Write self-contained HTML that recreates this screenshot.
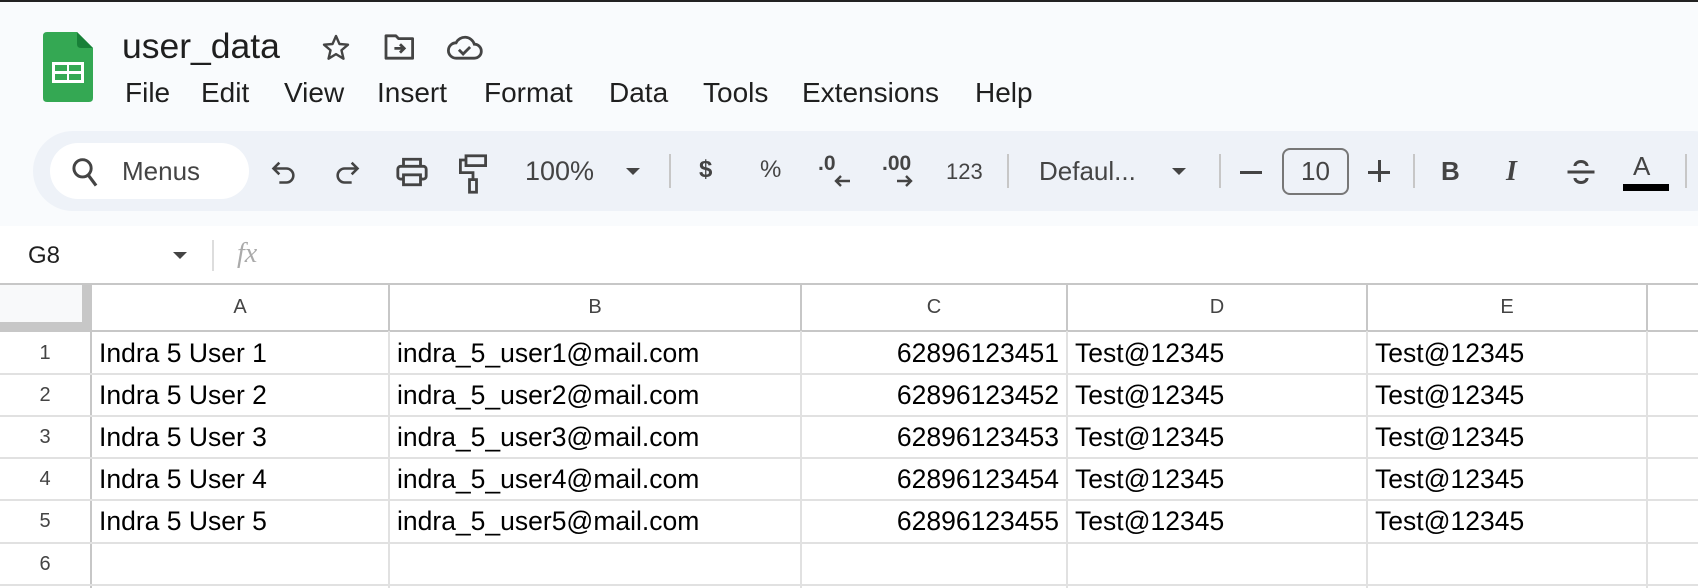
<!DOCTYPE html>
<html><head><meta charset="utf-8"><style>
*{margin:0;padding:0;box-sizing:border-box}
body{width:1698px;height:588px;overflow:hidden;background:#fff;font-family:"Liberation Sans",Arial,sans-serif;position:relative;color:#000}
.a{position:absolute}
.hdr{left:0;top:0;width:1698px;height:226px;background:#f9fbfd;border-top:2px solid #222}
.tb{left:33px;top:131px;width:1700px;height:80px;background:#eef2f8;border-radius:40px}
.pill{left:50px;top:143px;width:199px;height:56px;background:#fff;border-radius:28px}
.menu{top:77px;font-size:28px;color:#1f1f1f}
.t{font-size:26px;color:#444;top:156px}
.sep{width:2px;height:34px;background:#c7c7c7;top:154px}
.v{position:absolute;width:2px;background:#e1e1e1}
.h{position:absolute;height:2px;background:#e1e1e1;left:0;width:1698px}
.cell{position:absolute;font-size:26.5px;line-height:42px;white-space:nowrap}
.rn{position:absolute;left:0;width:90px;text-align:center;font-size:20px;color:#444;line-height:42px}
.ch{position:absolute;top:284px;height:47px;line-height:47px;text-align:center;font-size:20px;color:#444}
</style></head><body>
<div class="a hdr"></div>
<svg class="a" style="left:43px;top:32px" width="50" height="70" viewBox="0 0 50 70">
<path d="M4 0H34L50 16V66Q50 70 46 70H4Q0 70 0 66V4Q0 0 4 0Z" fill="#34a853"/>
<path d="M34 0L50 16H38Q34 16 34 12Z" fill="#188038"/>
<rect x="9" y="30" width="32" height="21" fill="#fff"/>
<rect x="12" y="33" width="12" height="6" fill="#34a853"/><rect x="26" y="33" width="12" height="6" fill="#34a853"/>
<rect x="12" y="42" width="12" height="6" fill="#34a853"/><rect x="26" y="42" width="12" height="6" fill="#34a853"/>
</svg>
<div class="a" style="left:122px;top:26px;font-size:35.5px;color:#1f1f1f">user_data</div>
<svg class="a" style="left:319px;top:32px" width="34" height="32" viewBox="0 0 24 24"><path d="M12 3l2.6 6 6.4.5-4.9 4.2 1.5 6.3L12 16.6 6.4 20l1.5-6.3L3 9.5l6.4-.5z" fill="none" stroke="#444" stroke-width="1.8" stroke-linejoin="round"/></svg>
<svg class="a" style="left:383px;top:33px" width="34" height="28" viewBox="0 0 24 20"><path d="M2 2h7l2 2h10v14H2z" fill="none" stroke="#444" stroke-width="2" stroke-linejoin="round"/><path d="M8 11h7M12 8l3 3-3 3" fill="none" stroke="#444" stroke-width="2"/></svg>
<svg class="a" style="left:446px;top:33px" width="37" height="28" viewBox="0 0 26 20"><path d="M7 18h13a5 5 0 0 0 0-10 7 7 0 0 0-13-1 5.5 5.5 0 0 0 0 11z" fill="none" stroke="#444" stroke-width="2"/><path d="M9 12l3 3 5-5" fill="none" stroke="#444" stroke-width="2"/></svg>
<div class="a menu" style="left:125px">File</div>
<div class="a menu" style="left:201px">Edit</div>
<div class="a menu" style="left:284px">View</div>
<div class="a menu" style="left:377px">Insert</div>
<div class="a menu" style="left:484px">Format</div>
<div class="a menu" style="left:609px">Data</div>
<div class="a menu" style="left:703px">Tools</div>
<div class="a menu" style="left:802px">Extensions</div>
<div class="a menu" style="left:975px">Help</div>
<div class="a tb"></div>
<div class="a pill"></div>
<svg class="a" style="left:70px;top:156px" width="30" height="32" viewBox="0 0 24 26"><circle cx="10" cy="10" r="7" fill="none" stroke="#444" stroke-width="2.4"/><path d="M15 16l6 8" stroke="#444" stroke-width="2.6"/></svg>
<div class="a t" style="left:122px;font-size:26px">Menus</div>
<svg class="a" style="left:270px;top:158px" width="28" height="28" viewBox="0 0 24 24"><path d="M8 4L3 9l5 5" fill="none" stroke="#444" stroke-width="2.2"/><path d="M3 9h11a6 6 0 0 1 0 12H8" fill="none" stroke="#444" stroke-width="2.2"/></svg>
<svg class="a" style="left:333px;top:158px" width="28" height="28" viewBox="0 0 24 24"><path d="M16 4l5 5-5 5" fill="none" stroke="#444" stroke-width="2.2"/><path d="M21 9H10a6 6 0 0 0 0 12h6" fill="none" stroke="#444" stroke-width="2.2"/></svg>
<svg class="a" style="left:395px;top:155px" width="34" height="34" viewBox="0 0 24 24"><path d="M6 8V3h12v5" fill="none" stroke="#444" stroke-width="2"/><rect x="2" y="8" width="20" height="9" rx="2" fill="none" stroke="#444" stroke-width="2"/><rect x="6" y="14" width="12" height="7" fill="#eef2f8" stroke="#444" stroke-width="2"/></svg>
<svg class="a" style="left:459px;top:154px" width="28" height="40" viewBox="0 0 20 28"><rect x="5" y="1" width="14" height="7" fill="none" stroke="#444" stroke-width="2"/><path d="M5 4H1v9h9v5" fill="none" stroke="#444" stroke-width="2"/><rect x="7.5" y="18" width="5" height="9" fill="none" stroke="#444" stroke-width="2"/></svg>
<div class="a t" style="left:525px;font-size:27px">100%</div>
<div class="a" style="left:626px;top:168px;width:0;height:0;border-left:7px solid transparent;border-right:7px solid transparent;border-top:7px solid #444"></div>
<div class="a sep" style="left:669px"></div>
<div class="a t" style="left:699px;font-weight:bold;font-size:24px">$</div>
<div class="a t" style="left:760px;font-size:24px">%</div>
<div class="a" style="left:818px;top:152px;font-size:21px;color:#444;font-weight:bold">.0</div>
<svg class="a" style="left:833px;top:174px" width="18" height="14" viewBox="0 0 18 14"><path d="M17 7H3M8 2L3 7l5 5" fill="none" stroke="#444" stroke-width="2.4"/></svg>
<div class="a" style="left:882px;top:152px;font-size:21px;color:#444;font-weight:bold">.00</div>
<svg class="a" style="left:896px;top:174px" width="18" height="14" viewBox="0 0 18 14"><path d="M1 7h14M10 2l5 5-5 5" fill="none" stroke="#444" stroke-width="2.4"/></svg>
<div class="a t" style="left:946px;font-size:22px;top:159px">123</div>
<div class="a sep" style="left:1007px"></div>
<div class="a t" style="left:1039px;font-size:26px">Defaul...</div>
<div class="a" style="left:1172px;top:168px;width:0;height:0;border-left:7px solid transparent;border-right:7px solid transparent;border-top:7px solid #444"></div>
<div class="a sep" style="left:1219px"></div>
<div class="a" style="left:1240px;top:171px;width:22px;height:2.5px;background:#444"></div>
<div class="a" style="left:1282px;top:148px;width:67px;height:47px;border:2px solid #777;border-radius:8px;text-align:center;line-height:43px;font-size:26px;color:#444">10</div>
<div class="a" style="left:1368px;top:171px;width:22px;height:2.5px;background:#444"></div>
<div class="a" style="left:1378px;top:160px;width:2.5px;height:22px;background:#444"></div>
<div class="a sep" style="left:1413px"></div>
<div class="a t" style="left:1441px;font-weight:bold;font-size:26px">B</div>
<div class="a t" style="left:1506px;font-style:italic;font-weight:bold;font-family:'Liberation Serif',serif;font-size:28px">I</div>
<svg class="a" style="left:1566px;top:157px" width="30" height="30" viewBox="0 0 20 20"><path d="M1 10h18" stroke="#444" stroke-width="2"/><path d="M6 6a4 3 0 0 1 8 0M6 14a4 3 0 0 0 8 0" fill="none" stroke="#444" stroke-width="2"/></svg>
<div class="a t" style="left:1633px;font-size:26px;top:151px">A</div>
<div class="a" style="left:1623px;top:184px;width:46px;height:7px;background:#000"></div>
<div class="a sep" style="left:1685px"></div>
<div class="a" style="left:28px;top:242px;font-size:24px;color:#1f1f1f">G8</div>
<div class="a" style="left:173px;top:252px;width:0;height:0;border-left:7px solid transparent;border-right:7px solid transparent;border-top:7px solid #444"></div>
<div class="a" style="left:212px;top:240px;width:2px;height:31px;background:#ddd"></div>
<div class="a" style="left:237px;top:238px;font-size:28px;color:#aaa;font-style:italic;font-family:'Liberation Serif',serif">fx</div>
<div class="h" style="top:283px;background:#c7c7c7"></div>
<div class="a" style="left:0;top:285px;width:82px;height:37px;background:#f8f9fa"></div>
<div class="a" style="left:82px;top:285px;width:10px;height:46px;background:#c7c7c7"></div>
<div class="a" style="left:0;top:322px;width:92px;height:9px;background:#c7c7c7"></div>
<div class="h" style="top:330px;background:#c7c7c7"></div>
<div class="v" style="left:90px;top:330px;height:258px;background:#c7c7c7"></div>
<div class="v" style="left:388px;top:284px;height:47px;background:#c7c7c7"></div>
<div class="v" style="left:800px;top:284px;height:47px;background:#c7c7c7"></div>
<div class="v" style="left:1066px;top:284px;height:47px;background:#c7c7c7"></div>
<div class="v" style="left:1366px;top:284px;height:47px;background:#c7c7c7"></div>
<div class="v" style="left:1646px;top:284px;height:47px;background:#c7c7c7"></div>
<div class="v" style="left:388px;top:331px;height:257px"></div>
<div class="v" style="left:800px;top:331px;height:257px"></div>
<div class="v" style="left:1066px;top:331px;height:257px"></div>
<div class="v" style="left:1366px;top:331px;height:257px"></div>
<div class="v" style="left:1646px;top:331px;height:257px"></div>
<div class="h" style="top:373px"></div>
<div class="h" style="top:415px"></div>
<div class="h" style="top:457px"></div>
<div class="h" style="top:499px"></div>
<div class="h" style="top:542px"></div>
<div class="h" style="top:584px"></div>
<div class="ch" style="left:92px;width:296px">A</div>
<div class="ch" style="left:390px;width:410px">B</div>
<div class="ch" style="left:802px;width:264px">C</div>
<div class="ch" style="left:1068px;width:298px">D</div>
<div class="ch" style="left:1368px;width:278px">E</div>

<div class="rn" style="top:332px">1</div><div class="rn" style="top:374px">2</div><div class="rn" style="top:416px">3</div><div class="rn" style="top:458px">4</div><div class="rn" style="top:500px">5</div><div class="rn" style="top:543px">6</div>

<div class="cell" style="left:99px;top:332px">Indra 5 User 1</div>
<div class="cell" style="left:397px;top:332px">indra_5_user1@mail.com</div>
<div class="cell" style="left:802px;width:257px;text-align:right;top:332px">62896123451</div>
<div class="cell" style="left:1075px;top:332px">Test@12345</div>
<div class="cell" style="left:1375px;top:332px">Test@12345</div>

<div class="cell" style="left:99px;top:374px">Indra 5 User 2</div>
<div class="cell" style="left:397px;top:374px">indra_5_user2@mail.com</div>
<div class="cell" style="left:802px;width:257px;text-align:right;top:374px">62896123452</div>
<div class="cell" style="left:1075px;top:374px">Test@12345</div>
<div class="cell" style="left:1375px;top:374px">Test@12345</div>

<div class="cell" style="left:99px;top:416px">Indra 5 User 3</div>
<div class="cell" style="left:397px;top:416px">indra_5_user3@mail.com</div>
<div class="cell" style="left:802px;width:257px;text-align:right;top:416px">62896123453</div>
<div class="cell" style="left:1075px;top:416px">Test@12345</div>
<div class="cell" style="left:1375px;top:416px">Test@12345</div>

<div class="cell" style="left:99px;top:458px">Indra 5 User 4</div>
<div class="cell" style="left:397px;top:458px">indra_5_user4@mail.com</div>
<div class="cell" style="left:802px;width:257px;text-align:right;top:458px">62896123454</div>
<div class="cell" style="left:1075px;top:458px">Test@12345</div>
<div class="cell" style="left:1375px;top:458px">Test@12345</div>

<div class="cell" style="left:99px;top:500px">Indra 5 User 5</div>
<div class="cell" style="left:397px;top:500px">indra_5_user5@mail.com</div>
<div class="cell" style="left:802px;width:257px;text-align:right;top:500px">62896123455</div>
<div class="cell" style="left:1075px;top:500px">Test@12345</div>
<div class="cell" style="left:1375px;top:500px">Test@12345</div>
</body></html>
